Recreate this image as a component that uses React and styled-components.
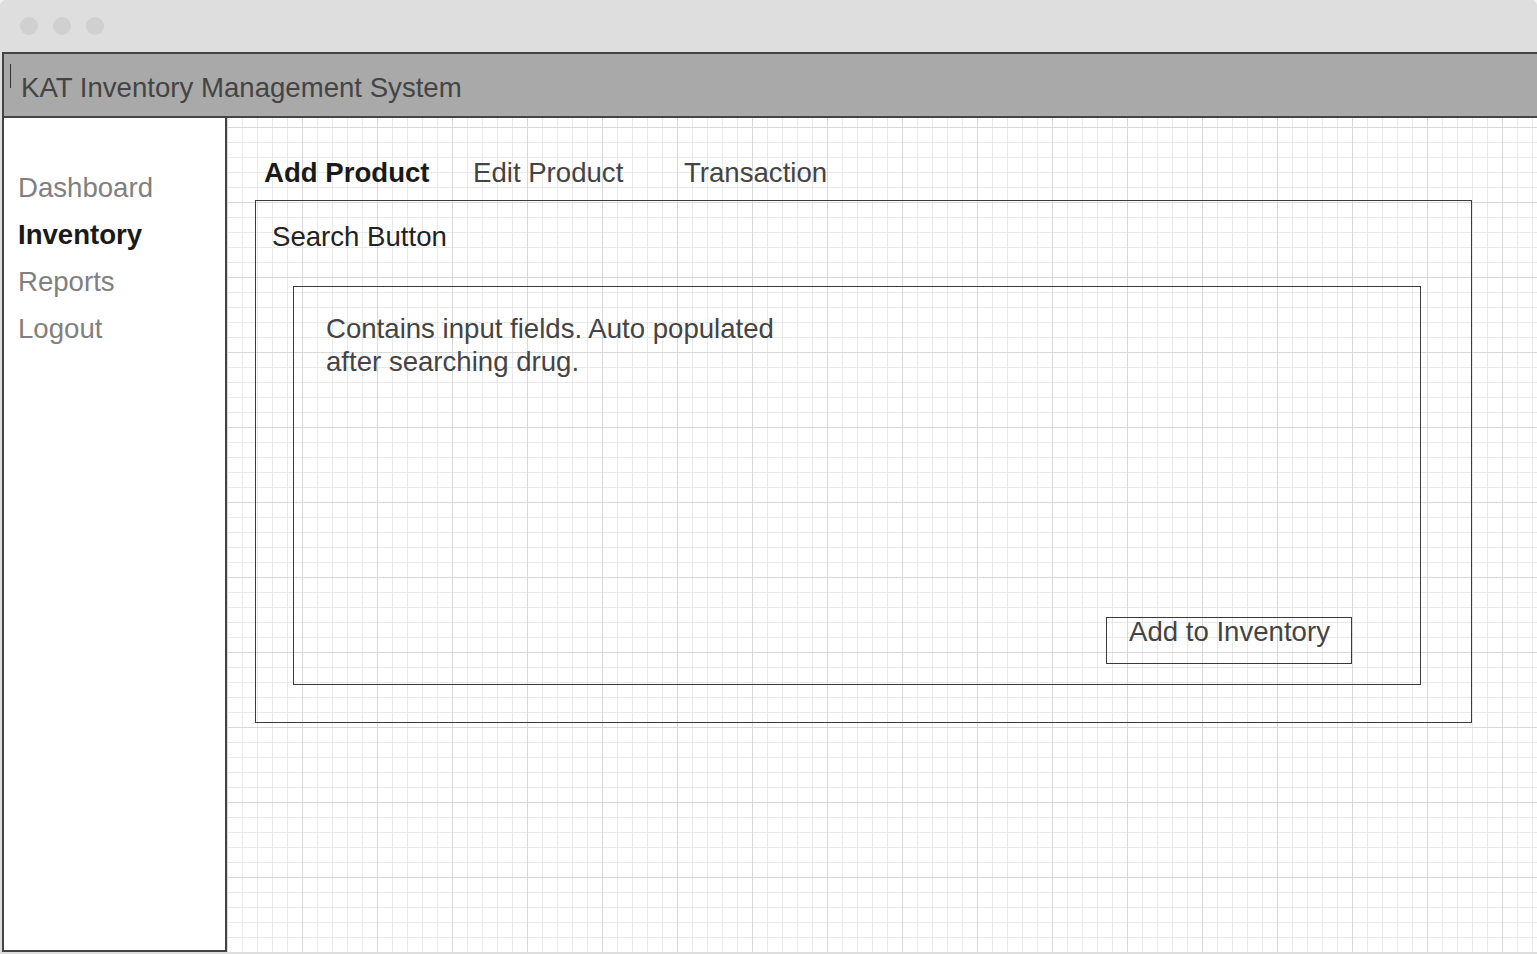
import React from "react";
import styled, { createGlobalStyle } from "styled-components";

const GlobalStyle = createGlobalStyle`
  * {
    box-sizing: border-box;
  }
  body {
    margin: 0;
    background: #f4f4f4;
    font-family: "Liberation Sans", Arial, sans-serif;
    overflow: hidden;
  }
`;

const navItems = [
  { label: "Dashboard" },
  { label: "Inventory", active: true },
  { label: "Reports" },
  { label: "Logout" },
];

const tabs = [
  { label: "Add Product", active: true, width: 209 },
  { label: "Edit Product", width: 211 },
  { label: "Transaction", width: 200 },
];

function App() {
  return (
    <>
      <GlobalStyle />
      <Window>
        <TitleBar>
          <Dot />
          <Dot />
          <Dot />
        </TitleBar>
        <Header>
          <Cursor />
          <HeaderTitle>KAT Inventory Management System</HeaderTitle>
        </Header>
        <Body>
          <Sidebar>
            {navItems.map((item) => (
              <NavItem key={item.label} $active={item.active}>
                {item.label}
              </NavItem>
            ))}
          </Sidebar>
          <Main>
            <TabRow>
              {tabs.map((tab) => (
                <Tab key={tab.label} $active={tab.active} $w={tab.width}>
                  {tab.label}
                </Tab>
              ))}
            </TabRow>
            <OuterBox>
              <SearchLabel>Search Button</SearchLabel>
              <InnerBox>
                <Note>
                  Contains input fields. Auto populated
                  <br />
                  after searching drug.
                </Note>
                <AddButton>Add to Inventory</AddButton>
              </InnerBox>
            </OuterBox>
          </Main>
        </Body>
      </Window>
    </>
  );
}

const Window = styled.div`
  display: flex;
  flex-direction: column;
  height: 954px;
  padding: 0 0 2px 2px;
  background: #dedede;
  border-radius: 7px 7px 0 0;
  box-shadow: 0 0 2px rgba(0, 0, 0, 0.15);
`;

const TitleBar = styled.div`
  display: flex;
  align-items: center;
  gap: 15px;
  height: 52px;
  padding: 0 0 0 18px;
`;

const Dot = styled.span`
  width: 18px;
  height: 18px;
  border-radius: 50%;
  background: #d0d0d0;
`;

const Header = styled.div`
  display: flex;
  align-items: flex-start;
  height: 66px;
  padding-top: 18px;
  background: #a9a9a9;
  border-top: 2px solid #444;
  border-bottom: 2px solid #444;
  border-left: 2px solid #444;
`;

const Cursor = styled.span`
  width: 1px;
  height: 24px;
  margin: -8px 0 0 6px;
  background: #333;
`;

const HeaderTitle = styled.div`
  margin-left: 10px;
  font-size: 27.6px;
  line-height: 32px;
  color: #444;
`;

const Body = styled.div`
  display: flex;
  flex: 1;
  min-height: 0;
`;

const Sidebar = styled.nav`
  display: flex;
  flex-direction: column;
  gap: 15.3px;
  width: 225px;
  flex-shrink: 0;
  padding: 53.5px 0 0 14px;
  background: #fff;
  border: 2px solid #444;
  border-top: none;
`;

const NavItem = styled.div`
  font-size: 27.6px;
  line-height: 32px;
  font-weight: ${(p) => (p.$active ? 700 : 400)};
  color: ${(p) => (p.$active ? "#1a1a1a" : "#808080")};
`;

const Main = styled.main`
  flex: 1;
  padding: 38.5px 0 0 28px;
  background-color: #fff;
  background-image: linear-gradient(to right, #d8d8d8 1px, transparent 1px),
    linear-gradient(to bottom, #d8d8d8 1px, transparent 1px),
    linear-gradient(to right, #e9e9e9 1px, transparent 1px),
    linear-gradient(to bottom, #e9e9e9 1px, transparent 1px);
  background-size: 75px 75px, 75px 75px, 15px 15px, 15px 15px;
  background-position: 0 9px;
`;

const TabRow = styled.div`
  display: flex;
  padding-left: 9px;
  margin-bottom: 11.5px;
`;

const Tab = styled.div`
  width: ${(p) => p.$w}px;
  font-size: 27.6px;
  line-height: 32px;
  font-weight: ${(p) => (p.$active ? 700 : 400)};
  color: ${(p) => (p.$active ? "#1a1a1a" : "#444")};
`;

const OuterBox = styled.section`
  width: 1217px;
  height: 523px;
  padding: 19.5px 0 0 16px;
  border: 1px solid #3a3a3a;
`;

const SearchLabel = styled.div`
  font-size: 27.6px;
  line-height: 32px;
  color: #222;
`;

const InnerBox = styled.div`
  display: flex;
  flex-direction: column;
  width: 1128px;
  height: 399px;
  margin: 33.5px 0 0 21px;
  padding: 26px 0 0 32px;
  border: 1px solid #3a3a3a;
`;

const Note = styled.p`
  margin: 0;
  font-size: 27.6px;
  line-height: 32.5px;
  color: #444;
`;

const AddButton = styled.button`
  display: flex;
  align-items: flex-start;
  align-self: flex-end;
  width: 246px;
  height: 47px;
  margin: auto 68px 20px 0;
  padding: 0 0 0 22px;
  background: transparent;
  border: 1px solid #3a3a3a;
  font-family: inherit;
  font-size: 27.6px;
  line-height: 27px;
  color: #444;
`;

export default App;
